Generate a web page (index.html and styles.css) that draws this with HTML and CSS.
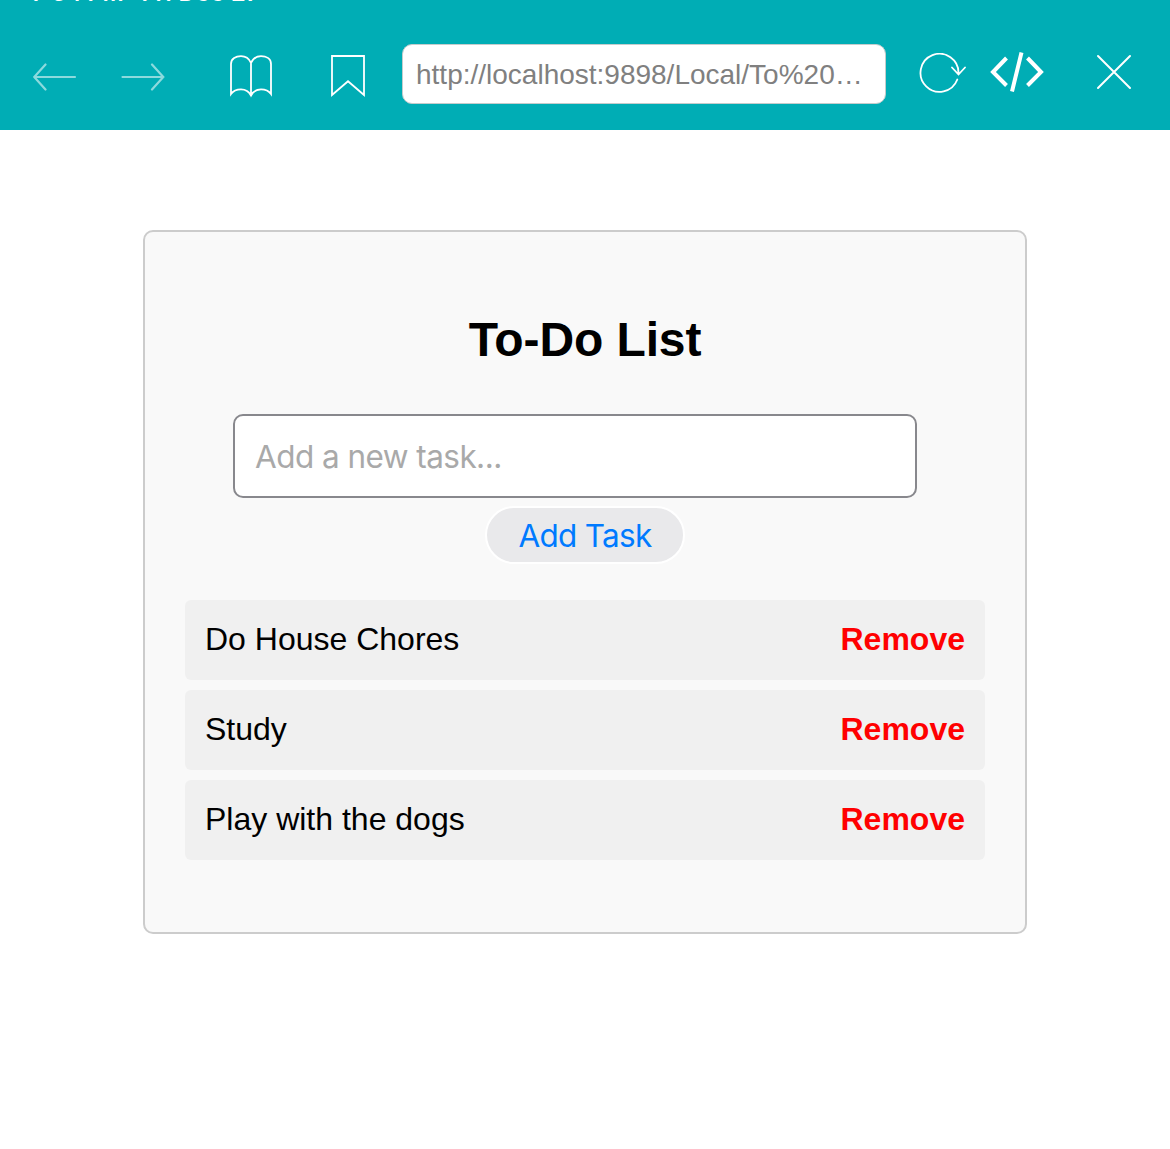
FILE: index.html
```html
<!DOCTYPE html>
<html lang="en">
<head>
<meta charset="utf-8">
<title>To-Do List</title>
<link rel="stylesheet" href="styles.css">
</head>
<body>
<header class="browser">
  <div class="status"><span class="time">7:34 PM</span><span class="date">Fri Dec 27</span></div>
  <nav class="toolbar">
    <svg class="icon back" viewBox="0 0 44 28"><path d="M12.500 1.500 1.200 14 12.500 26.500M1.200 14H42"/></svg>
    <svg class="icon forward" viewBox="0 0 44 28"><path d="M31 1.500 42.300 14 31 26.500M42.300 14H1.500"/></svg>
    <svg class="icon book" viewBox="0 0 44 44"><path d="M22 41.500V9C20 4.500 17 2.200 12 2.200S2 4.500 2 10V40C4.500 36.500 8 35.400 12 35.400S20 37.500 22 41.500C24 37.500 28 35.400 32 35.400S39.500 36.500 42 40V10C42 4.500 37 2.200 32 2.200S24 4.500 22 9"/></svg>
    <svg class="icon mark" viewBox="0 0 36 44"><path d="M2 2H34V41L18 27.200 2 41Z"/></svg>
    <div class="address">http://localhost:9898/Local/To%20…</div>
    <svg class="icon reload" viewBox="0 0 48 42"><path d="M38.300 26.500A19 19 0 1 1 39.500 20.500M33 14.500 39.500 21.500 46 14.500"/></svg>
    <svg class="icon code" viewBox="0 0 54 42"><path d="M16.500 7 3 21 16.500 34.500M37.500 7 51 21 37.500 34.500M31.500 1.500 22 40.500"/></svg>
    <svg class="icon close" viewBox="0 0 36 36"><path d="M2 2 34 34M34 2 2 34"/></svg>
  </nav>
</header>
<main class="card">
  <h1 class="title">To-Do List</h1>
  <input class="task-input" type="text" placeholder="Add a new task...">
  <button class="add" type="button">Add Task</button>
  <ul class="tasks">
    <li class="task"><span>Do House Chores</span><span class="remove">Remove</span></li>
    <li class="task"><span>Study</span><span class="remove">Remove</span></li>
    <li class="task"><span>Play with the dogs</span><span class="remove">Remove</span></li>
  </ul>
</main>
</body>
</html>
```
FILE: styles.css
```css
* { box-sizing: border-box; }
body {
  margin: 0;
  background: #fff;
  color: #000;
  font-family: "Liberation Sans", Arial, sans-serif;
}
.browser {
  height: 130px;
  background: #00adb5;
  overflow: hidden;
}
/* The status line is mostly scrolled off the top edge. */
.status {
  display: flex;
  gap: 18px;
  height: 30px;
  margin-top: -22px;
  padding-left: 32px;
  color: #fff;
  font: 600 23.5px/30px Inter, sans-serif;
  white-space: nowrap;
}
.time { font-size: 23px; }
.date { letter-spacing: .5px; }
.toolbar {
  display: flex;
  align-items: flex-start;
  padding: 36px 0 0 33px;
}
.icon {
  flex: none;
  fill: none;
  stroke: #fff;
  stroke-width: 1.8;
  stroke-linecap: round;
}
.back, .forward { width: 44px; height: 28px; margin-top: 19px; stroke-width: 2.2; opacity: .55; }
.forward { margin-left: 44px; }
.book { width: 44px; height: 44px; margin: 10px 0 0 64px; }
.mark { width: 36px; height: 44px; margin: 10px 0 0 57px; stroke-linecap: butt; }
.address {
  width: 484px;
  height: 60px;
  margin-left: 36px;
  padding-left: 13px;
  border: 1px solid #c4cccc;
  border-radius: 10px;
  background: #fff;
  color: #808080;
  font-size: 28px;
  line-height: 60px;
  white-space: nowrap;
}
.reload { width: 48px; height: 42px; margin: 9px 0 0 33px; }
.code { width: 54px; height: 42px; margin: 7px 0 0 23px; stroke-width: 4; stroke-linecap: butt; }
.close { width: 36px; height: 36px; margin: 10px 0 0 52px; stroke-width: 2; }
.card {
  display: flex;
  flex-direction: column;
  align-items: center;
  width: 884px;
  height: 704px;
  margin: 100px auto 0;
  padding: 80px 40px 0;
  border: 2px solid #ccc;
  border-radius: 10px;
  background: #f9f9f9;
}
.title {
  margin: 0;
  font-size: 48px;
  line-height: 56px;
  letter-spacing: -.1px;
}
.task-input {
  width: 684px;
  height: 84px;
  margin: 46px 20px 0 0;
  padding: 0 20px;
  border: 2px solid #88888d;
  border-radius: 10px;
  background: #fff;
  font: 31.5px Inter, sans-serif;
  letter-spacing: -.55px;
}
.task-input::placeholder { color: #a9a9a9; opacity: 1; }
.add {
  width: 200px;
  height: 58px;
  margin-top: 8px;
  padding: 1px 0 0;
  border: 2px solid #fff;
  border-radius: 29px;
  background: #e9e9eb;
  color: #007aff;
  font: 31.5px Inter, sans-serif;
  letter-spacing: -.7px;
}
.tasks {
  display: grid;
  gap: 10px;
  width: 800px;
  margin: 36px 0 0;
  padding: 0;
  list-style: none;
}
.task {
  display: flex;
  justify-content: space-between;
  height: 80px;
  padding: 0 20px;
  border-radius: 6px;
  background: #f0f0f0;
  font-size: 32px;
  line-height: 78px;
}
.remove { color: #f00; font-weight: 700; }
```
